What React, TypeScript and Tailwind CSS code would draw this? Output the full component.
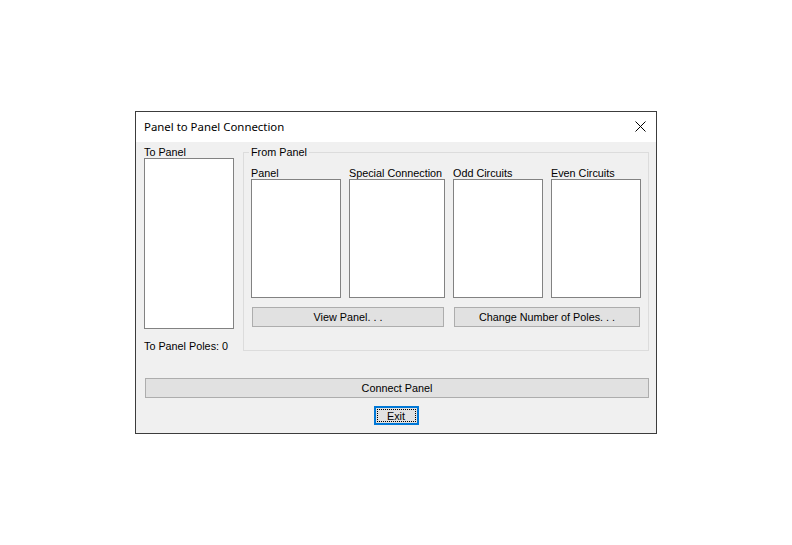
const ui = '[font-family:"Liberation_Sans",Arial,sans-serif] text-[10.8px] leading-[12px] text-black';

function ListBox({ w, h }: { w: number; h: number }) {
  return <div className="bg-white border border-[#828282]" style={{ width: w, height: h }} />;
}

function Column({ label, w }: { label: string; w: number }) {
  return (
    <div className="flex flex-col" style={{ width: w }}>
      <div className="h-[12px] whitespace-nowrap">{label}</div>
      <ListBox w={w} h={119} />
    </div>
  );
}

export default function App() {
  return (
    <div className="w-[792px] h-[545px] bg-white pt-[111px] pl-[135px]">
      <div className={`w-[522px] h-[323px] border border-[#3c3c3c] flex flex-col ${ui}`}>
        {/* title bar */}
        <div className="h-[30px] bg-white flex items-center justify-between pl-[8px] pr-[10px] shrink-0">
          <span className='[font-family:"Noto_Sans",sans-serif] text-[11.4px] leading-[16px]'>Panel to Panel Connection</span>
          <svg width="11" height="11" viewBox="0 0 11 11" className="mt-[-1px]">
            <path d="M0.5 0.5 L10.5 10.5 M10.5 0.5 L0.5 10.5" stroke="#000" strokeWidth="1" />
          </svg>
        </div>

        <div className="flex-1 bg-[#f0f0f0] px-[8px] flex flex-col">
          <div className="flex items-start">
            <div className="w-[90px] flex flex-col pt-[4px]">
              <div className="h-[12px]">To Panel</div>
              <ListBox w={90} h={171} />
              <div className="mt-[11px] h-[12px] whitespace-nowrap">To Panel Poles: 0</div>
            </div>

            <fieldset className="ml-[9px] mt-[4px] w-[407px] border border-[#dcdcdc] px-[7px] pb-[23px]">
              <legend className="-ml-[2px] px-[2px] h-[12px]">From Panel</legend>
              <div className="mt-[9px] flex gap-[8px]">
                <Column label="Panel" w={90} />
                <Column label="Special Connection" w={96} />
                <Column label="Odd Circuits" w={90} />
                <Column label="Even Circuits" w={90} />
              </div>
              <div className="mt-[9px] flex gap-[10px] pl-[1px]">
                <button className="w-[192px] h-[20px] bg-[#e1e1e1] border border-[#adadad]">View Panel. . .</button>
                <button className="w-[186px] h-[20px] bg-[#e1e1e1] border border-[#adadad]">Change Number of Poles. . .</button>
              </div>
            </fieldset>
          </div>

          <button className="mt-[26px] ml-[1px] w-[504px] h-[20px] bg-[#e1e1e1] border border-[#adadad]">Connect Panel</button>

          <div className="mt-[8px] flex justify-center">
            <button className="w-[45px] h-[19px] bg-[#e1e1e1] border-2 border-[#0078d7] p-[1px] flex">
              <span className="flex-1 border border-dotted border-black flex items-center justify-center">Exit</span>
            </button>
          </div>
        </div>
      </div>
    </div>
  );
}
